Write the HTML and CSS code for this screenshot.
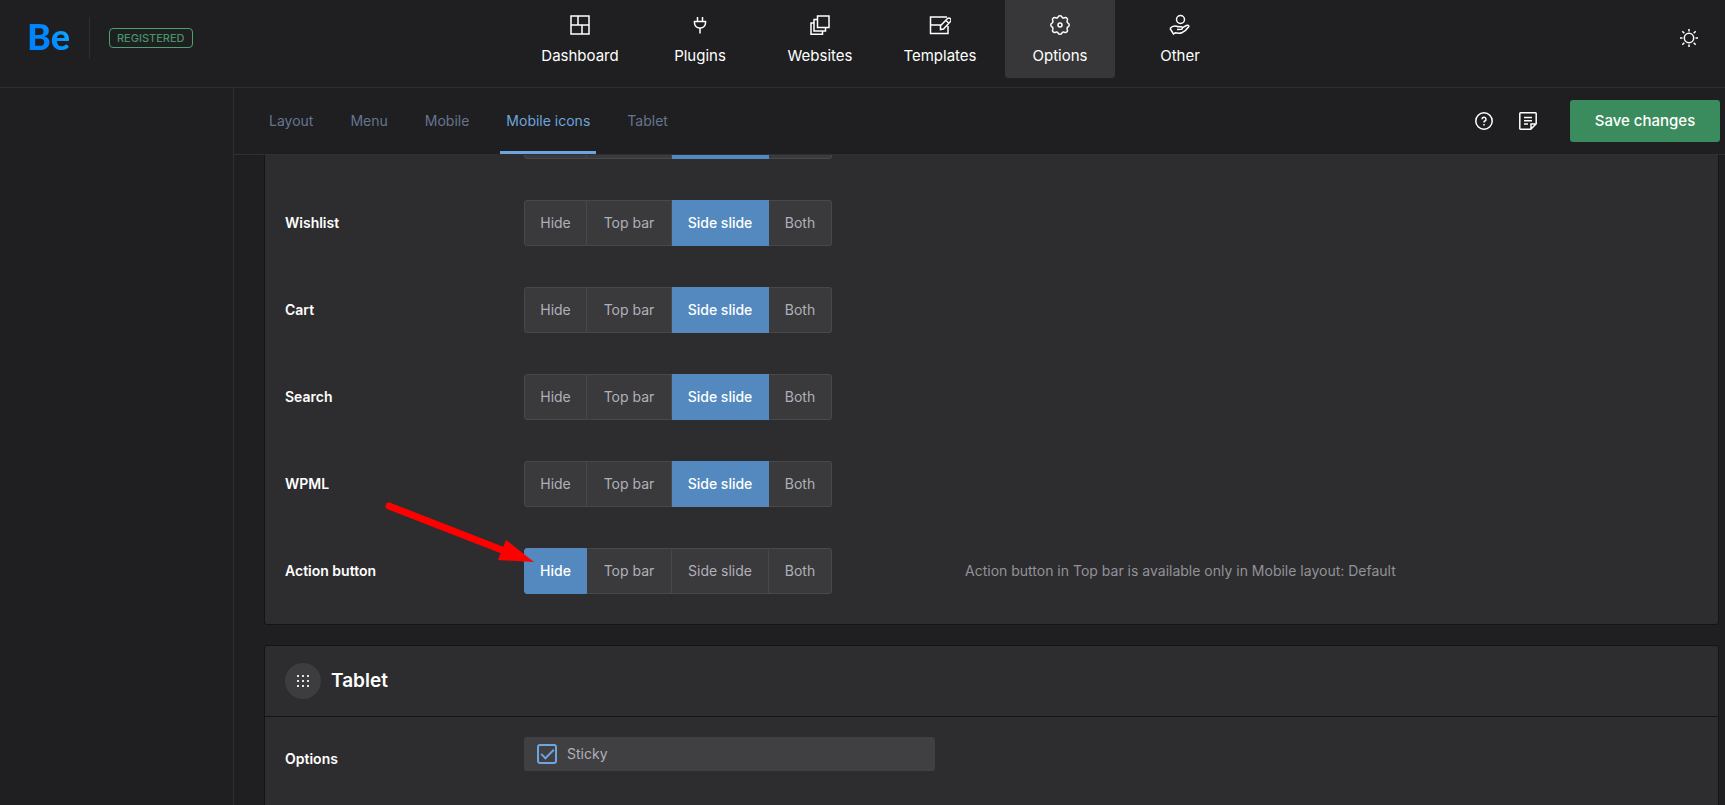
FILE: index.html
```html
<!DOCTYPE html>
<html lang="en">
<head>
<meta charset="utf-8">
<title>Be Theme Options</title>
<link rel="stylesheet" href="styles.css">
</head>
<body>
<div class="app">
  <header class="header">
    <div class="brand">
      <a class="logo" href="#">Be</a>
      <span class="badge">REGISTERED</span>
    </div>
    <nav class="main-nav">
      <a class="nav-item" href="#"><svg class="icon" viewBox="0 0 22 22"><path d="M2 2h18v18H2zM2 11h18M9 2v9M13 11v9"/></svg>Dashboard</a>
      <a class="nav-item" href="#"><svg class="icon" viewBox="0 0 22 22"><path d="M8.500 3v4M13.500 3v4M5.500 7.500h11v1.500a5 5 0 0 1-5 5h-1a5 5 0 0 1-5-5zM11 14v5.500"/></svg>Plugins</a>
      <a class="nav-item" href="#"><svg class="icon" viewBox="0 0 22 22"><path d="M8.500 2H20v11.500H8.500zM8.500 5.500H5V17h11.500v-3.500M5 9H2v11.200h11.500V17"/></svg>Websites</a>
      <a class="nav-item" href="#"><svg class="icon" viewBox="0 0 22 22"><path d="M18 3H1.500v16.500H19V12M1.500 11H12M11.500 15.500v-3.800l7-7.200a1.900 1.900 0 0 1 2.700 0l.3.300a1.900 1.900 0 0 1 0 2.700l-7 7.500zM17 6.500l2.800 2.800"/></svg>Templates</a>
      <a class="nav-item is-active" href="#" aria-current="page"><svg class="icon" viewBox="0 0 22 22"><path d="M8.700 3.600 Q9.300 1.800 11 1.800 Q12.700 1.800 13.300 3.600 Q14.200 4.300 15.300 3.800 Q17 3.200 18 4.200 Q19 5.100 18.200 6.800 Q17.800 7.900 18.500 8.700 Q20.200 9.300 20.200 11 Q20.200 12.700 18.500 13.300 Q17.800 14.200 18.200 15.200 Q19 16.900 18 17.800 Q17 18.800 15.300 18.200 Q14.200 17.700 13.300 18.400 Q12.700 20.200 11 20.200 Q9.300 20.200 8.700 18.400 Q7.800 17.700 6.700 18.200 Q5 18.800 4 17.800 Q3 16.900 3.800 15.200 Q4.200 14.200 3.500 13.300 Q1.800 12.700 1.800 11 Q1.800 9.300 3.500 8.700 Q4.200 7.900 3.800 6.800 Q3 5.100 4 4.200 Q5 3.200 6.700 3.800 Q7.800 4.300 8.700 3.600Z"/><circle cx="11" cy="11" r="2"/></svg>Options</a>
      <a class="nav-item" href="#"><svg class="icon" viewBox="0 0 22 22"><circle cx="11.500" cy="5.500" r="4"/><path d="M1 14.500l3.500 5.500 1.800-1.200c2 .4 5 .5 6.500-.1 2.600-1 5.300-3.700 6.900-6 .7-1.300-.9-2-2.300-1.200l-4.200 2.300M1 14.500c2-2.200 4.600-3 6.500-2.200 1.500.6 3 .5 4.600.4 1.900 0 1.800 2.300.1 2.600l-4.200.3"/></svg>Other</a>
    </nav>
    <button class="icon-button theme-toggle" type="button" aria-label="Toggle theme"><svg class="icon" viewBox="0 0 22 22"><circle cx="11" cy="11" r="4.700"/><path d="M11 2v2.500M11 17.500V20M2 11h2.500M17.500 11H20M4.300 4.300l2 2M15.700 15.700l2 2M17.700 4.300l-2 2M6.300 15.700l-2 2"/></svg></button>
  </header>

  <div class="workspace">
    <aside class="sidebar"></aside>
    <main class="content">
      <div class="toolbar">
        <nav class="tabs">
          <a class="tab" href="#">Layout</a>
          <a class="tab" href="#">Menu</a>
          <a class="tab" href="#">Mobile</a>
          <a class="tab is-active" href="#">Mobile icons</a>
          <a class="tab" href="#">Tablet</a>
        </nav>
        <div class="actions">
          <button class="icon-button" type="button" aria-label="Help"><svg class="icon" viewBox="0 0 22 22"><circle cx="11" cy="11" r="8.200"/><path d="M9 9.200a2 2 0 1 1 2.900 1.800c-.6.300-.9.700-.9 1.300v.3M11 14v1.600"/></svg></button>
          <button class="icon-button" type="button" aria-label="Notes"><svg class="icon" viewBox="0 0 22 22"><path d="M3.500 2.800h15a.7.700 0 0 1 .7.700v10.300l-5.400 5.400H3.500a.7.700 0 0 1-.7-.7v-15a.7.700 0 0 1 .7-.7zM19 14h-5v5M7 7.500h8M7 10.800h8M7 14h4"/></svg></button>
          <button class="save" type="button">Save changes</button>
        </div>
      </div>

      <div class="panels">
        <section class="card card-icons">
          <div class="row">
            <div class="segmented">
              <button type="button" aria-label="Hide"></button><button type="button" aria-label="Top bar"></button><button type="button" class="is-on" aria-label="Side slide"></button><button type="button" aria-label="Both"></button>
            </div>
          </div>
          <div class="row">
            <span class="row-label" id="wishlist">Wishlist</span>
            <div class="segmented" role="group" aria-labelledby="wishlist">
              <button type="button">Hide</button><button type="button">Top bar</button><button type="button" class="is-on">Side slide</button><button type="button">Both</button>
            </div>
          </div>
          <div class="row">
            <span class="row-label" id="cart">Cart</span>
            <div class="segmented" role="group" aria-labelledby="cart">
              <button type="button">Hide</button><button type="button">Top bar</button><button type="button" class="is-on">Side slide</button><button type="button">Both</button>
            </div>
          </div>
          <div class="row">
            <span class="row-label" id="search">Search</span>
            <div class="segmented" role="group" aria-labelledby="search">
              <button type="button">Hide</button><button type="button">Top bar</button><button type="button" class="is-on">Side slide</button><button type="button">Both</button>
            </div>
          </div>
          <div class="row">
            <span class="row-label" id="wpml">WPML</span>
            <div class="segmented" role="group" aria-labelledby="wpml">
              <button type="button">Hide</button><button type="button">Top bar</button><button type="button" class="is-on">Side slide</button><button type="button">Both</button>
            </div>
          </div>
          <div class="row">
            <span class="row-label" id="action">Action button</span>
            <div class="segmented" role="group" aria-labelledby="action">
              <button type="button" class="is-on">Hide</button><button type="button">Top bar</button><button type="button">Side slide</button><button type="button">Both</button>
              <svg class="pointer" viewBox="0 0 152 64"><path d="M7 6 120 50" stroke="#f00" stroke-width="7" stroke-linecap="round"/><path d="M124 40 152 62 116 60z" fill="#f00"/></svg>
            </div>
            <p class="row-note">Action button in Top bar is available only in Mobile layout: Default</p>
          </div>
        </section>

        <section class="card card-tablet">
          <div class="card-head">
            <span class="card-icon"><svg viewBox="0 0 12 12"><path d="M0 0h2v2H0zM5 0h2v2H5zM10 0h2v2h-2zM0 5h2v2H0zM5 5h2v2H5zM10 5h2v2h-2zM0 10h2v2H0zM5 10h2v2H5zM10 10h2v2h-2z"/></svg></span>
            <h2 class="card-title">Tablet</h2>
          </div>
          <div class="row row-options">
            <span class="row-label">Options</span>
            <label class="check"><input type="checkbox" checked>Sticky</label>
          </div>
        </section>
      </div>
    </main>
  </div>
</div>
</body>
</html>
```
FILE: styles.css
```css
* { box-sizing: border-box; }

body {
  margin: 0;
  background: #1f1f21;
  color: #fff;
  font: 14px/20px Inter, "Open Sans", sans-serif;
}

a { color: inherit; text-decoration: none; }
button { font: inherit; color: inherit; cursor: pointer; }

.app {
  display: flex;
  flex-direction: column;
  height: 100vh;
  overflow: hidden;
}

.icon {
  display: block;
  width: 22px;
  height: 22px;
  fill: none;
  stroke: currentColor;
  stroke-width: 1.5;
}

.icon-button {
  padding: 0;
  border: 0;
  background: none;
}

/* Header */
.header {
  display: grid;
  grid-template-columns: 1fr auto 1fr;
  flex: none;
  height: 88px;
  border-bottom: 1px solid #2f2f31;
}

.brand {
  display: flex;
  align-items: center;
  align-self: start;
  height: 76px;
  padding-left: 27px;
}

.logo {
  display: flex;
  align-items: center;
  height: 42px;
  padding-right: 19px;
  border-right: 1px solid #2f2f31;
  font: 900 36px/38px Lato, sans-serif;
  padding-bottom: 4px;
  background: linear-gradient(60deg, #0083ff 35%, #11b5ff 75%) no-repeat;
  background-clip: text;
  color: transparent;
}

.badge {
  margin-left: 19px;
  padding: 0 7px;
  border: 1px solid #4aa272;
  border-radius: 4px;
  color: #459468;
  font-size: 11px;
  font-weight: 500;
  line-height: 18px;
}

.main-nav {
  display: flex;
  gap: 10px;
  margin-left: 35px;
}

.nav-item {
  display: flex;
  flex-direction: column;
  align-items: center;
  gap: 10px;
  width: 110px;
  height: 78px;
  padding-top: 14px;
  border-radius: 0 0 3px 3px;
  font-size: 15px;
}

.nav-item.is-active { background: #373739; }

.theme-toggle {
  justify-self: end;
  align-self: start;
  margin: 27px 25px 0 0;
}

/* Workspace */
.workspace {
  display: flex;
  flex: 1;
  min-height: 0;
}

.sidebar {
  flex: none;
  width: 234px;
  border-right: 1px solid #2f2f31;
}

.content {
  display: flex;
  flex: 1;
  flex-direction: column;
  min-width: 0;
}

.toolbar {
  display: flex;
  flex: none;
  justify-content: space-between;
  height: 67px;
  padding: 0 5px 0 29px;
  border-bottom: 1px solid #2f2f31;
}

.tabs { display: flex; gap: 25px; }

.tab {
  padding: 23px 6px 20px;
  border-bottom: 3px solid transparent;
  color: #66758f;
}

.tab.is-active {
  border-color: #6ea5de;
  color: #6ea5de;
}

.actions {
  display: flex;
  align-items: center;
  gap: 22px;
}

.save {
  width: 150px;
  height: 42px;
  margin-left: 9px;
  border: 0;
  border-radius: 3px;
  background: #3a8b5d;
  font-size: 15px;
  font-weight: 500;
}

/* Panels */
.panels {
  display: flex;
  flex: 1;
  flex-direction: column;
  gap: 20px;
  min-height: 0;
  padding: 0 6px 0 30px;
  overflow: hidden;
}

.card {
  flex: none;
  border: 1px solid #141416;
  border-radius: 3px;
  background: #2d2d2f;
  box-shadow: 0 0 8px rgba(255, 255, 255, 0.02);
}

/* The first card is shown scrolled part of the way up. */
.card-icons {
  display: flex;
  flex-direction: column;
  gap: 41px;
  margin-top: -43px;
  padding-bottom: 30px;
}

.row {
  display: grid;
  grid-template-columns: 209px minmax(0, 411px) 1fr;
  align-items: center;
  column-gap: 30px;
  padding: 0 20px;
}

.row-label { font-weight: 600; }

.row-note {
  margin: 0;
  color: #929298;
}

.segmented {
  position: relative;
  display: grid;
  grid-column: 2;
  grid-template-columns: 63px 85px 97px 63px;
  justify-content: start;
  height: 46px;
}

.segmented button {
  padding: 0;
  border: 1px solid #48484a;
  border-left-width: 0;
  background: #3a3a3c;
  color: #b0b0ba;
}

.segmented button:first-child {
  border-left-width: 1px;
  border-radius: 3px 0 0 3px;
}

.segmented button:nth-child(4) { border-radius: 0 3px 3px 0; }

.segmented button.is-on {
  border-color: #5389bf;
  background: #5389bf;
  color: #fff;
  font-weight: 500;
}

.pointer {
  position: absolute;
  top: -48px;
  left: -142px;
  width: 152px;
  height: 64px;
  fill: none;
  pointer-events: none;
}

.card-tablet { flex: 1 0 auto; margin-bottom: -4px; }

.card-head {
  display: flex;
  align-items: center;
  gap: 10px;
  height: 71px;
  padding: 0 20px;
  border-bottom: 1px solid #141416;
}

.card-icon {
  display: grid;
  place-items: center;
  width: 36px;
  height: 36px;
  border-radius: 50%;
  background: #3d3d3f;
}

.card-icon svg {
  width: 12px;
  height: 12px;
  fill: #e4e4e6;
}

.card-title {
  margin: 0;
  font-size: 19px;
  font-weight: 600;
}

.row-options {
  align-items: start;
  padding-top: 20px;
}

.row-options .row-label { padding-top: 12px; }

.check {
  display: flex;
  align-items: center;
  gap: 10px;
  height: 34px;
  padding: 0 13px;
  border-radius: 3px;
  background: #404042;
  color: #b0b0ba;
}

.check input {
  appearance: none;
  display: grid;
  place-items: center;
  width: 20px;
  height: 20px;
  margin: 0;
  border: 2px solid #6ea5de;
  border-radius: 3px;
}

.check input:checked::before {
  content: "";
  width: 11px;
  height: 5px;
  margin-bottom: 3px;
  border: solid #6ea5de;
  border-width: 0 0 2px 2px;
  transform: rotate(-45deg);
}
```
